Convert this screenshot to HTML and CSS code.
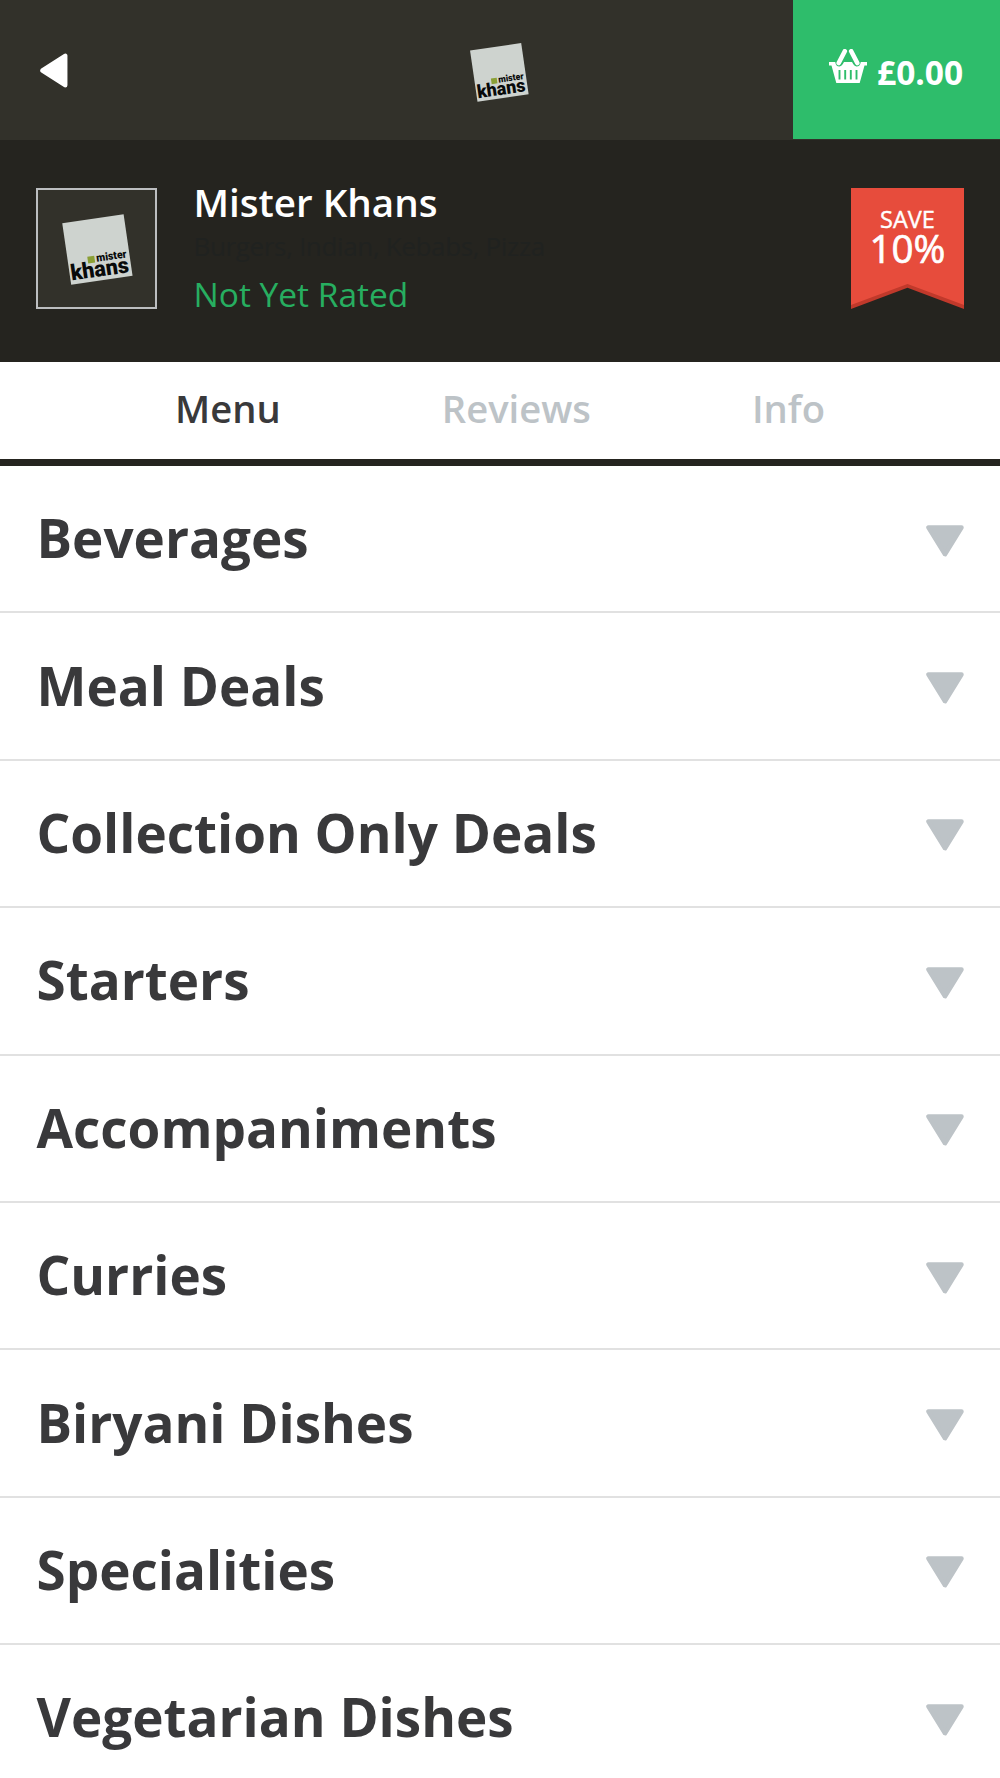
FILE: index.html
```html
<!DOCTYPE html>
<html lang="en">
<head>
    <meta charset="UTF-8">
    <meta name="viewport" content="width=device-width, initial-scale=1.0">
    <title>Mister Khans</title>
    <link rel="stylesheet" href="styles.css">
</head>
<body>
<!-- Shared icons -->
<svg class="sprite">
    <symbol id="logo" viewBox="0 0 72 72">
        <g transform="rotate(-8.3 36.4 36.5)">
            <rect x="5.4" y="5.5" width="62" height="62" fill="#ced3cf"/>
            <rect x="25.3" y="42.3" width="7" height="6.8" fill="#8a9f35"/>
            <text class="logo-small" x="34" y="48.6" textLength="30.5" lengthAdjust="spacingAndGlyphs">mister</text>
            <text class="logo-big" x="6.5" y="63.5" textLength="58.5" lengthAdjust="spacingAndGlyphs">khans</text>
        </g>
    </symbol>
    <symbol id="arrow" viewBox="0 0 38 32">
        <path d="M2.5 2.5H35.5L19 29.2Z" fill="#bdc3c7" stroke="#bdc3c7" stroke-width="4.5" stroke-linejoin="round"/>
    </symbol>
</svg>

<header class="topbar">
    <a class="back" href="#">
        <svg width="28" height="35" viewBox="0 0 28 35"><path d="M2.5 17.5L25.2 2.8V32.2Z" fill="#fff" stroke="#fff" stroke-width="4.5" stroke-linejoin="round"/></svg>
    </a>
    <svg class="topbar-logo"><use href="#logo"/></svg>
    <a class="basket" href="#">
        <svg class="basket-icon" width="38" height="34" viewBox="0 0 38 34">
            <path d="M15.8 2.2L9.7 14M22.2 2.2L28.3 14" stroke="#fff" stroke-width="4.6" stroke-linecap="round"/>
            <path d="M0 13H6.2Q7 17.6 10.5 17.5Q13 17 15 13H23Q25 17 27.5 17.5Q31 17.6 31.8 13H38V16.5H35.5L30.7 34H7.3L2.5 16.5H0Z" fill="#fff"/>
            <path d="M10.5 21V30.5M16.2 21V30.5M21.8 21V30.5M27.5 21V30.5" stroke="#2ebd6b" stroke-width="1.9"/>
        </svg>
        <span>£0.00</span>
    </a>
</header>

<section class="restaurant">
    <div class="thumb">
        <svg class="thumb-logo"><use href="#logo"/></svg>
    </div>
    <div class="details">
        <h1>Mister Khans</h1>
        <p class="cuisines">Burgers, Indian, Kebabs, Pizza</p>
        <p class="rating">Not Yet Rated</p>
    </div>
    <div class="ribbon">
        <div class="ribbon-face">
            <span class="save">SAVE</span>
            <span class="amount">10%</span>
        </div>
    </div>
</section>

<nav class="tabs">
    <a class="tab active" href="#">Menu</a>
    <a class="tab" href="#">Reviews</a>
    <a class="tab" href="#">Info</a>
</nav>

<ul class="categories">
    <li><span>Beverages</span><svg class="arrow"><use href="#arrow"/></svg></li>
    <li><span>Meal Deals</span><svg class="arrow"><use href="#arrow"/></svg></li>
    <li><span>Collection Only Deals</span><svg class="arrow"><use href="#arrow"/></svg></li>
    <li><span>Starters</span><svg class="arrow"><use href="#arrow"/></svg></li>
    <li><span>Accompaniments</span><svg class="arrow"><use href="#arrow"/></svg></li>
    <li><span>Curries</span><svg class="arrow"><use href="#arrow"/></svg></li>
    <li><span>Biryani Dishes</span><svg class="arrow"><use href="#arrow"/></svg></li>
    <li><span>Specialities</span><svg class="arrow"><use href="#arrow"/></svg></li>
    <li><span>Vegetarian Dishes</span><svg class="arrow"><use href="#arrow"/></svg></li>
</ul>
</body>
</html>
```
FILE: styles.css
```css
* {
    box-sizing: border-box;
}

body, h1, p, ul {
    margin: 0;
    padding: 0;
}

body {
    font-family: "Open Sans", sans-serif;
    background-color: #fff;
    color: #39393b;
    height: 1778px;
    overflow: hidden;
}

a {
    color: inherit;
    text-decoration: none;
}

svg {
    display: block;
    flex: none;
    fill: none;
}

.sprite {
    display: none;
}

.logo-small,
.logo-big {
    font-family: Roboto, sans-serif;
    font-weight: 900;
    fill: #080a0a;
}
.logo-small {
    font-size: 11px;
}
.logo-big {
    font-size: 22px;
}

/* Top bar */
.topbar {
    display: grid;
    grid-template-columns: 1fr 60px 1fr;
    align-items: center;
    height: 140px;
    background-color: #32312a;
}
.back {
    padding-left: 40px;
}
.topbar-logo {
    width: 60px;
    height: 60px;
    margin: 4px 0 0 -1px;
}
.basket {
    display: flex;
    align-items: center;
    justify-self: end;
    align-self: start;
    gap: 10px;
    width: 207px;
    height: 139px;
    padding-left: 36px;
    background-color: #2ebd6b;
    color: #fff;
    font-size: 33.5px;
    font-weight: 700;
}
.basket span {
    margin-top: 4px;
}
.basket-icon {
    margin-bottom: 7px;
}

/* Restaurant summary */
.restaurant {
    display: flex;
    height: 222px;
    padding: 48px 36px 0;
    background-color: #25241f;
}
.thumb {
    display: flex;
    align-items: center;
    justify-content: center;
    width: 121px;
    height: 121px;
    border: 2px solid #bcbec0;
    background-color: #32312a;
}
.thumb-logo {
    width: 72px;
    height: 72px;
}
.details {
    flex: 1;
    padding-left: 36.5px;
}
.details h1 {
    margin-top: -12px;
    font-size: 38.6px;
    font-weight: 600;
    line-height: 52px;
    color: #fff;
}
.cuisines {
    font-size: 26px;
    line-height: 36px;
    letter-spacing: -0.35px;
    color: #202220;
}
.rating {
    margin-top: 8px;
    font-size: 33.5px;
    line-height: 44px;
    color: #27ae60;
}

/* Discount ribbon, the darker layer shows as the folded edge */
.ribbon {
    width: 113px;
    height: 121px;
    background-color: #c0392b;
    clip-path: polygon(0 0, 100% 0, 100% 100%, 50% 82.5%, 0 100%);
}
.ribbon-face {
    display: flex;
    flex-direction: column;
    align-items: center;
    height: 117px;
    padding-top: 16px;
    background-color: #e74c3c;
    clip-path: polygon(0 0, 100% 0, 100% 100%, 50% 82%, 0 100%);
    color: #fff;
}
.save {
    font-size: 23.5px;
    -webkit-text-stroke: 0.4px #fff;
    line-height: 30px;
}
.amount {
    font-size: 38.5px;
    -webkit-text-stroke: 0.7px #fff;
    line-height: 29px;
}

/* Tabs */
.tabs {
    display: flex;
    justify-content: center;
    gap: 161px;
    height: 104px;
    border-bottom: 7px solid #25241f;
    line-height: 93px;
}
.tab {
    font-size: 38.2px;
    font-weight: 600;
    color: #bdc3c7;
}
.tab.active {
    color: #39393b;
}

/* Menu categories */
.categories {
    list-style: none;
}
.categories li {
    display: flex;
    align-items: center;
    justify-content: space-between;
    height: 147.4px;
    padding: 0 36px 0 36.5px;
    border-bottom: 2px solid #e1e1e1;
    font-size: 53px;
    font-weight: 700;
}
.categories span {
    margin-top: -2px;
}
.arrow {
    width: 38px;
    height: 32px;
    margin-top: 4px;
}
```
